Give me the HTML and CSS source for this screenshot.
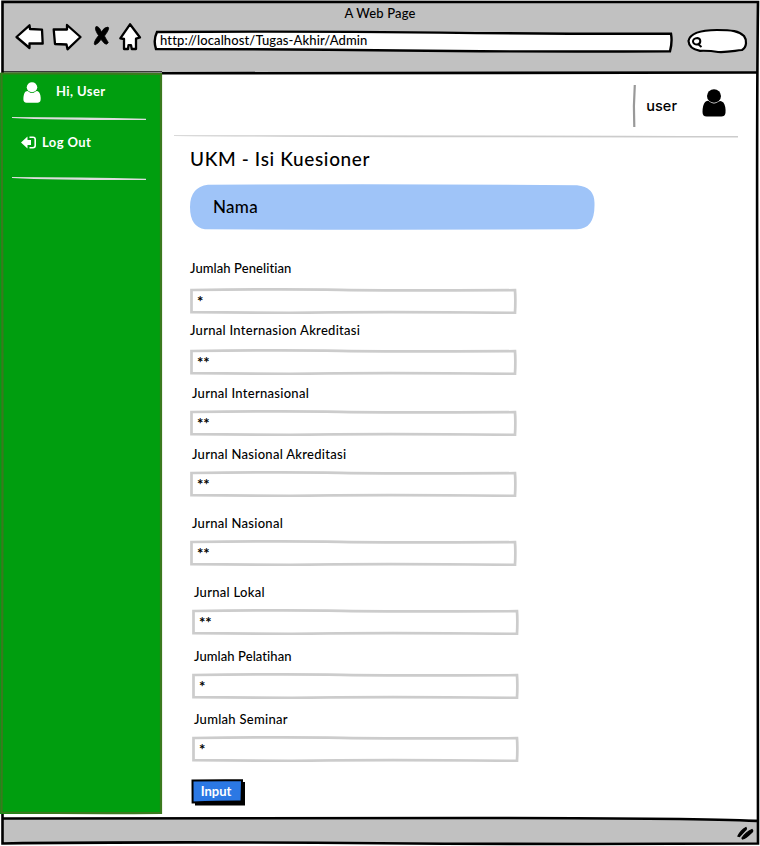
FILE: index.html
```html
<!DOCTYPE html>
<html lang="id">
<head>
<meta charset="utf-8">
<title>A Web Page</title>
<link rel="stylesheet" href="styles.css">
</head>
<body>
<div class="window">
  <header class="chrome">
    <div class="window-title"><span>A Web Page</span></div>
    <div class="toolbar">
      <svg class="nav-icons" width="130" height="32" viewBox="14 22 130 32">
        <g fill="#fff" stroke="#000" stroke-width="2.3" stroke-linejoin="round">
          <path d="M16.5 37 29.5 25.3 30 29 42 29.6 42.7 43.5 29.5 43.5 29.5 48Z"/>
          <path d="M53.7 29.5 67 29.5 67 25 80.5 37 67.5 49.3 66.5 44.5 55 44Z"/>
          <path d="M130 24.3 140 37.5 136 38.7 136 49 131.8 49 131 45.2 128.5 45.2 128 49 124 49 124 39 120.3 38.3Z"/>
        </g>
        <path d="M96 26.5Q99 26 101.5 32Q104 27 108 27Q110.500 28 104.500 36Q106 39 108.300 42.500Q107 45.500 104.500 43.500L101 39.500Q98.500 43.500 95 45Q92.500 43 98.500 35.500Q94 29 96 26.500Z" stroke="#000" stroke-width=".7"/>
      </svg>
      <div class="address">
        <svg class="sketch" width="520" height="24" viewBox="153 29 520 24"><path d="M157 32Q300 31 440 32.600T671 33.700Q672.500 42 670 51.300Q520 52 400 50.500T156 49Q153 40 157 32Z" fill="#fff" stroke="#000" stroke-width="2.400"/></svg>
        <span class="url">http://localhost/Tugas-Akhir/Admin</span>
      </div>
      <svg class="search" width="62" height="27" viewBox="686 27 62 27">
        <path d="M688.500 41C690 33 702 30 717 30S739 31 744 36C747 40 747 47 742 50C733 51 728 52.500 718 52Q710 50.500 700 50.800Q689 49 688.500 41Z" fill="#fff" stroke="#000" stroke-width="2.200"/>
        <path d="M697.500 38C701 38.500 701.500 43.500 697.500 44.500C692 45 691 38.500 697.500 38ZM698.500 44.500 701.500 47" fill="none" stroke="#000" stroke-width="2"/>
      </svg>
    </div>
  </header>

  <div class="workspace">
    <aside class="sidebar">
      <div class="greeting">
        <svg width="18" height="21" viewBox="0 0 23 28" preserveAspectRatio="none"><path d="M3 13Q6 11 7 12.500Q11.500 16.500 16 12.500Q18 11 20.500 13.500Q23 17 22.500 24Q22 27.500 18.500 27.500H4.500Q0.500 27.500 0.500 23Q0.500 16 3 13Z"/><circle cx="11.500" cy="7" r="6.700"/></svg>
        <span class="hi">Hi, User</span>
      </div>
      <svg class="rule" width="136" height="4" viewBox="0 0 136 4"><path d="M0 0Q70 0 134 1.700V3Q45 3.300 0 1Z"/></svg>
      <a class="logout">
        <svg width="16" height="13" viewBox="0 0 16 13"><path d="M0 6.500 6.500.5V4H10V9H6.500V12.500Z"/><path d="M8.500 1.300H12Q14.200 1.300 14.200 3.500V9.500Q14.200 11.700 12 11.700H8.500" fill="none" stroke="#fff" stroke-width="1.600"/></svg>
        <span class="out">Log Out</span>
      </a>
      <svg class="rule" width="136" height="4" viewBox="0 0 136 4"><path d="M0 0Q70 0 134 1.700V3Q45 3.300 0 1Z"/></svg>
    </aside>

    <main class="content">
      <div class="userbar">
        <svg width="5" height="44" viewBox="0 0 5 44"><path d="M2.800 1Q1.300 22 2.300 43" fill="none" stroke="#999" stroke-width="2.200"/></svg>
        <span class="username">user</span>
        <svg class="avatar" width="24" height="28" viewBox="0 0 23 28" preserveAspectRatio="none"><path d="M3 13Q6 11 7 12.500Q11.500 16.500 16 12.500Q18 11 20.500 13.500Q23 17 22.500 24Q22 27.500 18.500 27.500H4.500Q0.500 27.500 0.500 23Q0.500 16 3 13Z"/><circle cx="11.500" cy="7" r="6.700"/></svg>
      </div>
      <svg class="divider" width="565" height="4" viewBox="0 0 565 4"><path d="M0 .3Q300 0 564 1V2.400Q200 2.600 0 .9Z" fill="#ccc"/></svg>
      <h1><span>UKM - Isi Kuesioner</span></h1>
      <div class="name-card">
        <svg class="sketch" width="405" height="46" viewBox="0 0 405 46"><path d="M18 .8Q200-.3 387 1.200Q405 3 404.500 20Q405 45 387 45.300Q200 46 15 45.300Q0 43 0 23Q0 3 18 .8Z" fill="#9fc4f8"/></svg>
        <span class="nama">Nama</span>
      </div>
      <form>
        <div class="field f1"><label>Jumlah Penelitian</label><div class="box"><svg class="sketch" viewBox="0 0 327 26"><path d="M1.500 2Q90 .9 150 1.800T325 2.200Q325.700 12 325 24.800Q180 23.600 100 24.900L1.500 24.200Z"/></svg><span>*</span></div></div>
        <div class="field f2"><label>Jurnal Internasion Akreditasi</label><div class="box"><svg class="sketch" viewBox="0 0 327 26"><path d="M1.500 2Q90 .9 150 1.800T325 2.200Q325.700 12 325 24.800Q180 23.600 100 24.900L1.500 24.200Z"/></svg><span>**</span></div></div>
        <div class="field f3"><label>Jurnal Internasional</label><div class="box"><svg class="sketch" viewBox="0 0 327 26"><path d="M1.500 2Q90 .9 150 1.800T325 2.200Q325.700 12 325 24.800Q180 23.600 100 24.900L1.500 24.200Z"/></svg><span>**</span></div></div>
        <div class="field f4"><label>Jurnal Nasional Akreditasi</label><div class="box"><svg class="sketch" viewBox="0 0 327 26"><path d="M1.500 2Q90 .9 150 1.800T325 2.200Q325.700 12 325 24.800Q180 23.600 100 24.900L1.500 24.200Z"/></svg><span>**</span></div></div>
        <div class="field f5"><label>Jurnal Nasional</label><div class="box"><svg class="sketch" viewBox="0 0 327 26"><path d="M1.500 2Q90 .9 150 1.800T325 2.200Q325.700 12 325 24.800Q180 23.600 100 24.900L1.500 24.200Z"/></svg><span>**</span></div></div>
        <div class="field f6"><label>Jurnal Lokal</label><div class="box"><svg class="sketch" viewBox="0 0 327 26"><path d="M1.500 2Q90 .9 150 1.800T325 2.200Q325.700 12 325 24.800Q180 23.600 100 24.900L1.500 24.200Z"/></svg><span>**</span></div></div>
        <div class="field f7"><label>Jumlah Pelatihan</label><div class="box"><svg class="sketch" viewBox="0 0 327 26"><path d="M1.500 2Q90 .9 150 1.800T325 2.200Q325.700 12 325 24.800Q180 23.600 100 24.900L1.500 24.200Z"/></svg><span>*</span></div></div>
        <div class="field f8"><label>Jumlah Seminar</label><div class="box"><svg class="sketch" viewBox="0 0 327 26"><path d="M1.500 2Q90 .9 150 1.800T325 2.200Q325.700 12 325 24.800Q180 23.600 100 24.900L1.500 24.200Z"/></svg><span>*</span></div></div>
        <button type="button" class="submit">
          <svg class="sketch" width="54" height="27" viewBox="0 0 54 27"><path d="M4 3H54V26.500H4Z"/><path d="M1.500 1.600Q30 .9 51 1.300L50.500 22.600Q30 22.500 1.600 23.500Z" fill="#2b78e4" stroke="#000" stroke-width="2"/></svg>
          <span>Input</span>
        </button>
      </form>
    </main>
  </div>

  <footer class="status">
    <svg width="18" height="15" viewBox="0 0 18 15"><path d="M1 10Q4 4 9 1.500Q10 3 8 4.500L2.500 10.500ZM5 12Q9 6 15 3.500Q17 5 13.500 7.500Q9 12 5.500 13Z" stroke="#000" stroke-width="1.300"/></svg>
  </footer>

  <svg class="frame" width="760" height="846" viewBox="0 0 760 846" fill="none" stroke="#000" stroke-width="2.600">
    <path d="M2.500 73V1.800Q380 1.600 758 2Q756.500 120 757.500 400T758 843.500Q560 844.500 380 843.200Q150 841.500 2.500 843.500V814"/>
    <path d="M162 73.300Q400 71.800 757 72.500"/>
    <path d="M2.500 71.800H162" stroke-width="1"/>
    <path d="M2.500 818.500Q250 818 470 818T757 821"/>
    <path d="M1.500 73.500Q90 73 161 74Q160.500 440 161 813Q80 813.500 1.500 812.500Q3.500 440 1.500 73.500Z" stroke="#3a7a1e" stroke-width="2.200"/>
  </svg>
</div>
</body>
</html>
```
FILE: styles.css
```css
* { box-sizing: border-box; }
body { margin: 0; background: #fff; color: #000; font: 500 13px/20px Lato, "Open Sans", sans-serif; font-variant-ligatures: none; }
svg { display: block; flex: none; }
span, label { white-space: nowrap; }
.window { position: relative; width: 760px; height: 846px; overflow: hidden; display: grid; grid-template-rows: 73px 746px 27px; }
.frame { position: absolute; inset: 0; pointer-events: none; }
.sketch { position: absolute; left: 0; top: 0; }
.chrome { background: #c1c1c1; margin: 1px 2px 0; }
.window-title { height: 21px; padding-top: 2px; text-align: center; letter-spacing: .15px; }
.toolbar { display: flex; align-items: flex-start; padding-left: 12px; }
.nav-icons { margin-right: 9px; }
.address { position: relative; width: 520px; height: 24px; margin-top: 7px; padding: 1px 0 0 7px; line-height: 20px; letter-spacing: .12px; }
.address span { position: relative; }
.search { margin: 5px 0 0 13px; }
.workspace { display: grid; grid-template-columns: 162px 1fr; }
.sidebar { height: 741px; background: #009e0f; color: #fff; fill: #fff; font-weight: 700; padding: 8px 0 0 12px; letter-spacing: .4px; }
.greeting { display: flex; align-items: center; height: 22px; margin-bottom: 14px; padding-left: 11px; gap: 15px; }
.greeting span { margin-top: -2px; }
.rule { fill: #ddd; }
.logout { display: flex; align-items: center; height: 20px; margin: 11px 0 25px; padding-left: 9px; gap: 5px; }
.logout span { margin-top: -1px; }
.content { padding-left: 28px; }
.userbar { display: flex; height: 62px; padding: 11px 34px 0 0; justify-content: flex-end; align-items: flex-start; }
.username { font: 500 14.5px/20px Inter, sans-serif; margin: 12px 25px 0 9px; }
.avatar { margin-top: 5px; }
.divider { margin-left: -16px; }
h1 { margin: 10px 0 0; height: 35px; font: 500 19px/20px Lato, sans-serif; letter-spacing: .63px; }
.name-card { position: relative; width: 405px; height: 46px; padding: 13px 0 0 23px; font-size: 17px; letter-spacing: .3px; }
.name-card span { position: relative; }
form { padding-top: 28px; }
.field { display: grid; grid-template-rows: 20px 26px; row-gap: 7px; width: 327px; }
.field label { justify-self: start; letter-spacing: .28px; }
.field.f1 label, .field.f7 label { letter-spacing: .08px; }
.f1 { row-gap: 10px; margin-bottom: 6px; }
.f2 { row-gap: 9px; margin-bottom: 8px; }
.f3 { margin-bottom: 8px; }
.f4, .f5 { margin-bottom: 16px; }
.f3 label, .f4 label, .f5 label, .f6 label, .f7 label, .f8 label { margin-left: 2px; }
.f6, .f7, .f8 { margin-left: 2px; }
.f6 { margin-bottom: 11px; }
.f7 { margin-bottom: 10px; }
.f8 { margin-bottom: 17px; }
.box { position: relative; padding: 3px 0 0 7px; font-size: 15px; font-weight: 700; }
.box .sketch { width: 327px; height: 26px; fill: none; stroke: #ccc; stroke-width: 2.7; }
.submit { position: relative; display: block; width: 54px; height: 27px; margin-left: 1px; padding: 0 4px 4px 0; border: 0; background: none; color: #fff; font: 700 13px/20px Lato, sans-serif; }
.submit span { position: relative; }
.status { background: #c1c1c1; margin: 0 2px 3px; padding: 7px 3px 0; display: flex; justify-content: flex-end; }
```
